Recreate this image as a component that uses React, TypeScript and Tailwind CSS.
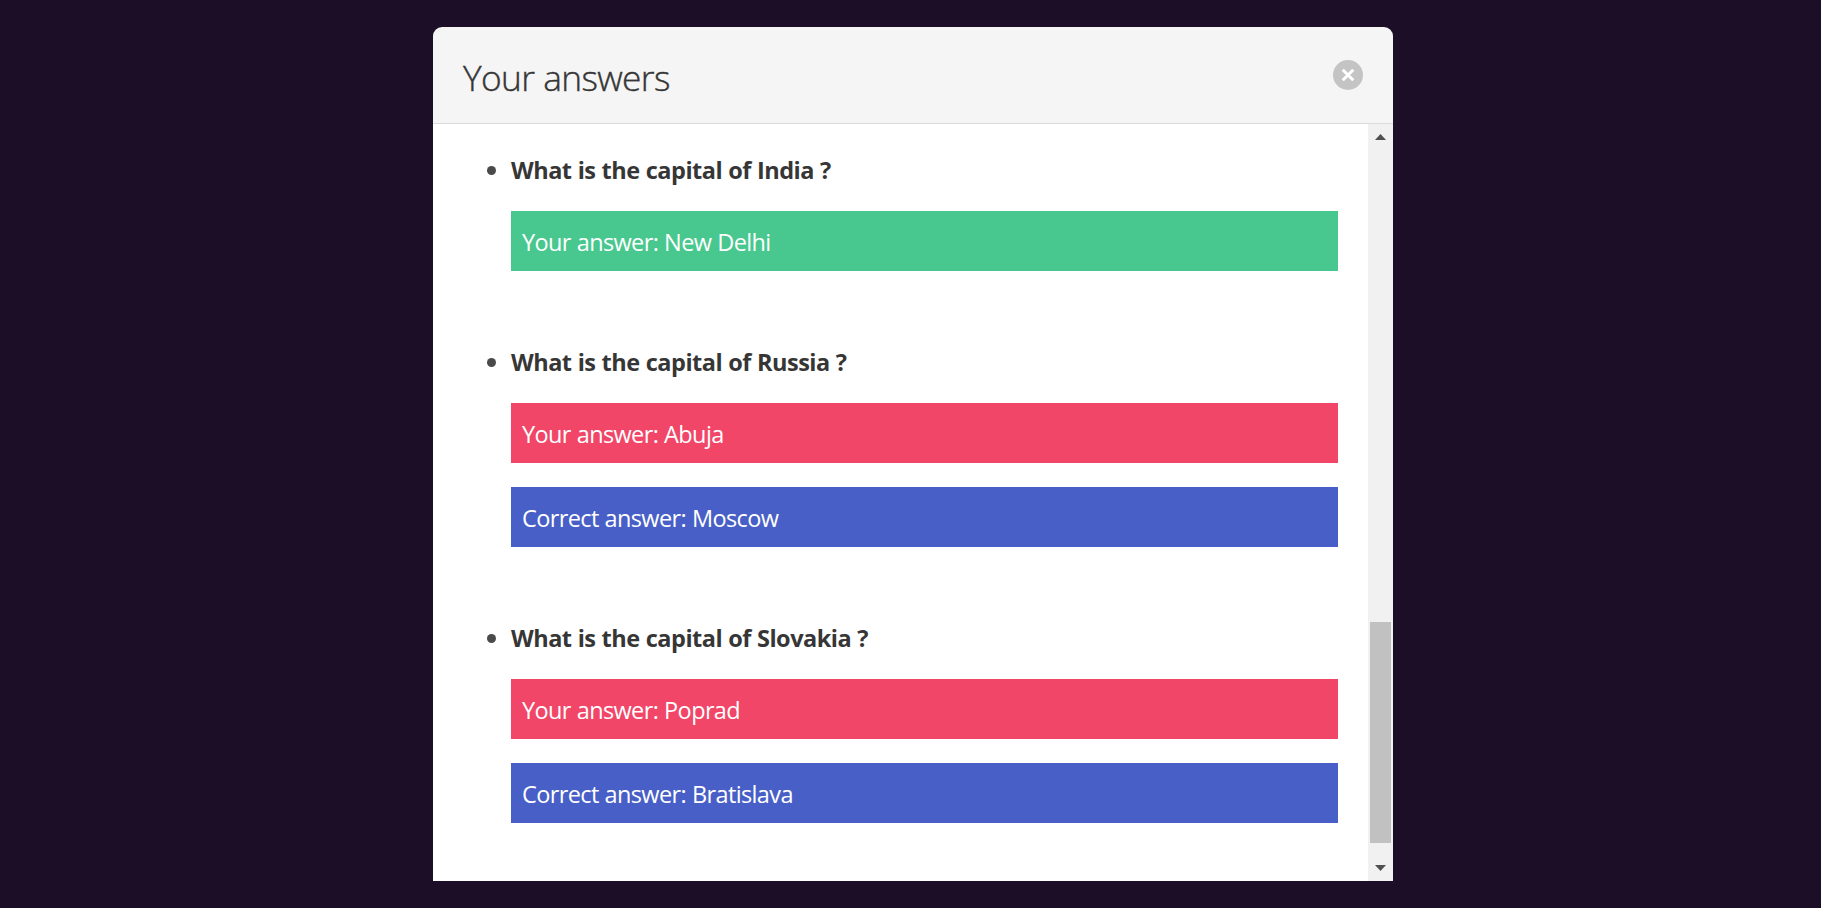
type Question = { title: string; answer: string; correct?: string };

const questions: Question[] = [
  { title: "What is the capital of India ?", answer: "New Delhi" },
  { title: "What is the capital of Russia ?", answer: "Abuja", correct: "Moscow" },
  { title: "What is the capital of Slovakia ?", answer: "Poprad", correct: "Bratislava" },
];

function QuestionItem({ title, answer, correct }: Question) {
  return (
    <li className="flex flex-col gap-6">
      <div className="flex h-9 items-center">
        <span className="mt-[3px] mr-[15px] size-[9px] rounded-full bg-[#4a4a4a]" />
        <strong className="pt-[2px] font-bold tracking-[-0.5px] whitespace-nowrap text-[#363636] [word-spacing:0.5px]">{title}</strong>
      </div>
      <p className={`ml-6 h-[60px] pt-[13px] pl-[11px] text-white ${correct ? "bg-[#f14668]" : "bg-[#48c78e]"}`}>
        Your answer: {answer}
      </p>
      {correct && (
        <p className="ml-6 h-[60px] bg-[#485fc7] pt-[13px] pl-[11px] text-white">
          Correct answer: {correct}
        </p>
      )}
    </li>
  );
}

function Scrollbar() {
  return (
    <div className="flex w-[25px] shrink-0 flex-col items-center bg-[#f1f1f1]">
      <svg className="mt-[10px]" width="11" height="6" viewBox="0 0 11 6" fill="#505050">
        <path d="M5.5 0L11 6H0Z" />
      </svg>
      <div className="mt-[482px] h-[221px] w-[21px] bg-[#c1c1c1]" />
      <svg className="mt-[22px]" width="11" height="6" viewBox="0 0 11 6" fill="#505050">
        <path d="M0 0H11L5.5 6Z" />
      </svg>
    </div>
  );
}

export default function App() {
  return (
    <div className="flex h-[908px] justify-center bg-[#1b0e26] pt-[27px] pl-[5px] font-['Open_Sans','Noto_Sans',sans-serif] text-[23.5px] leading-[36px] tracking-[-0.62px] [word-spacing:0.4px]">
      <div className="flex h-[854px] w-[960px] flex-col">
        <header className="flex h-[97px] shrink-0 items-center justify-between rounded-t-[9px] border-b border-[#dbdbdb] bg-[#f5f5f5] px-[30px]">
          <h1 className="pt-[3px] text-[35.3px] leading-[36px] font-light tracking-[-0.65px] text-[#363636] [-webkit-text-stroke:0.4px_#363636]">
            Your answers
          </h1>
          <button aria-label="close" className="flex size-[30px] items-center justify-center rounded-full bg-[#c4c4c4]">
            <svg width="14" height="14" viewBox="0 0 14 14" stroke="white" strokeWidth="3">
              <path d="M1.7 1.7L12.3 12.3M12.3 1.7L1.7 12.3" />
            </svg>
          </button>
        </header>
        <div className="flex min-h-0 flex-1 bg-white">
          <ul className="flex min-w-0 flex-1 flex-col gap-[72px] pt-[27px] pr-[30px] pl-[54px]">
            {questions.map((q) => (
              <QuestionItem key={q.title} {...q} />
            ))}
          </ul>
          <Scrollbar />
        </div>
      </div>
    </div>
  );
}
